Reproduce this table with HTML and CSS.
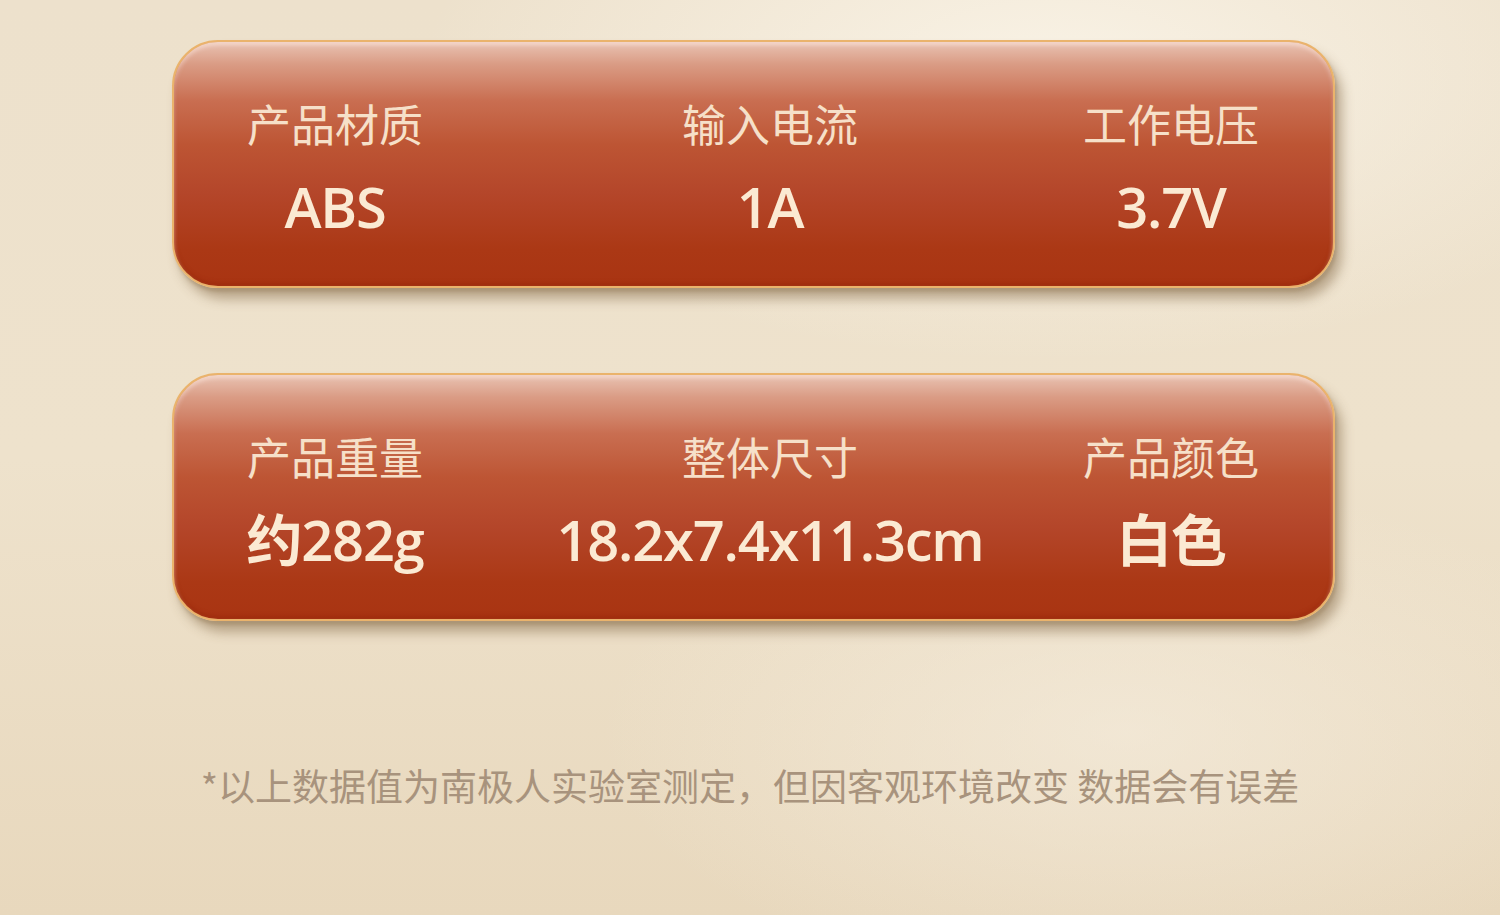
FILE: index.html
```html
<!DOCTYPE html>
<html lang="zh">
<head>
  <meta charset="utf-8">
  <meta name="viewport" content="width=device-width,initial-scale=1">
  <title>产品参数</title>
  <link rel="stylesheet" href="styles.css">
</head>
<body>

  <div class="page">
    <div class="spec-card">
      <div class="spec">
        <span class="spec-label">产品材质</span>
        <span class="spec-value">ABS</span>
      </div>
      <div class="spec">
        <span class="spec-label">输入电流</span>
        <span class="spec-value">1A</span>
      </div>
      <div class="spec">
        <span class="spec-label">工作电压</span>
        <span class="spec-value">3.7V</span>
      </div>
    </div>

    <div class="spec-card">
      <div class="spec">
        <span class="spec-label">产品重量</span>
        <span class="spec-value">约282g</span>
      </div>
      <div class="spec">
        <span class="spec-label">整体尺寸</span>
        <span class="spec-value">18.2x7.4x11.3cm</span>
      </div>
      <div class="spec">
        <span class="spec-label">产品颜色</span>
        <span class="spec-value">白色</span>
      </div>
    </div>

    <p class="note">*以上数据值为南极人实验室测定，但因客观环境改变 数据会有误差</p>
  </div>

</body>
</html>
```

FILE: styles.css
```css
:root {
  --cream:      #fbead3;
  --label:      #f6e0c9;
  --gold:       #eab36c;
  --note-brown: #a8937d;
}
* { margin:0; padding:0; box-sizing:border-box; }
html, body { height:100%; }
body {
  font-family:"Noto Sans CJK SC", "Noto Sans", sans-serif;
  background:
    radial-gradient(ellipse 60% 45% at 70% 8%, rgba(250,244,232,0.9), rgba(250,244,232,0) 70%),
    radial-gradient(ellipse 50% 40% at 75% 80%, rgba(246,238,224,0.6), rgba(246,238,224,0) 70%),
    linear-gradient(180deg, #ede1cc 0%, #eee2cc 50%, #e8d8bd 100%);
  overflow:hidden;
}
.page {
  width:1163px;
  margin-left:172px;
  padding-top:40px;
}
.spec-card {
  height:248px;
  display:grid;
  grid-template-columns:322px 548px 1fr;
  padding:53px 35px 0 0;
  border:2px solid var(--gold);
  border-radius:46px;
  background:linear-gradient(180deg,
    #e9c3b3 0%,
    #da9c85 9%,
    #c96e51 24%,
    #bd5534 42%,
    #b4462a 62%,
    #ab3815 85%,
    #a93412 100%);
  box-shadow:
    inset 0 3px 4px rgba(255,235,225,0.55),
    inset 0 -3px 4px rgba(140,30,5,0.35),
    7px 11px 12px rgba(120,92,55,0.45),
    2px 4px 3px rgba(140,110,70,0.25);
  margin-bottom:85px;
}
.spec {
  display:flex;
  flex-direction:column;
  align-items:center;
  color:var(--cream);
}
.spec-label {
  font-size:44px;
  line-height:56px;
  font-weight:400;
  color:var(--label);
}
.spec-value {
  margin-top:24px;
  font-family:"Open Sans", "Noto Sans CJK SC", sans-serif;
  font-size:56px;
  line-height:62px;
  font-weight:600;
  letter-spacing:-1.2px;
}
.note {
  margin-top:142px;
  margin-left:-172px;
  width:1500px;
  text-align:center;
  font-size:37px;
  line-height:44px;
  color:var(--note-brown);
}
```
